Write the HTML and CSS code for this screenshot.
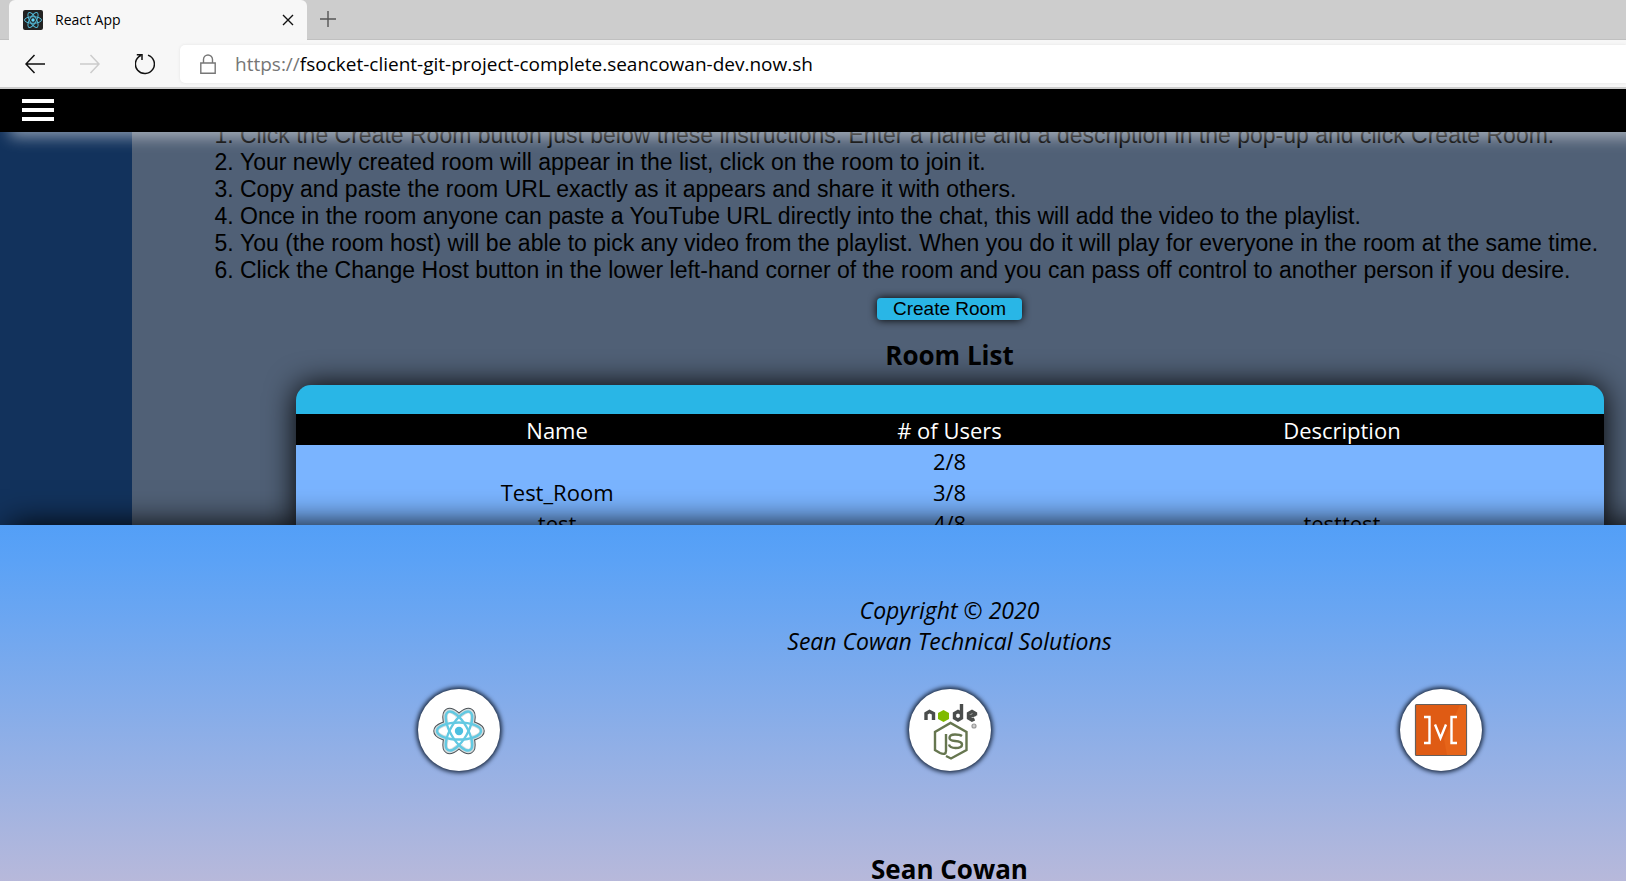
FILE: index.html
```html
<!DOCTYPE html>
<html lang="en">
<head>
<meta charset="utf-8">
<title>React App</title>
<link rel="stylesheet" href="styles.css">
</head>
<body>
<div class="browser">
  <div class="tabstrip">
    <div class="tab">
      <svg class="tab-icon" viewBox="0 0 20 20" aria-hidden="true">
        <rect width="20" height="20" rx="2" fill="#222"/>
        <g fill="none" stroke="#53b9d6" stroke-width="1">
          <ellipse cx="10" cy="10" rx="8.5" ry="3.3"/>
          <ellipse cx="10" cy="10" rx="8.5" ry="3.3" transform="rotate(60 10 10)"/>
          <ellipse cx="10" cy="10" rx="8.5" ry="3.3" transform="rotate(120 10 10)"/>
        </g>
        <circle cx="10" cy="10" r="1.7" fill="#61dafb"/>
      </svg>
      <span class="tab-title">React App</span>
      <button class="icon-button" aria-label="Close tab">
        <svg width="12" height="12" viewBox="0 0 12 12"><path d="M1 1L11 11M11 1L1 11" fill="none" stroke="#111" stroke-width="1.4"/></svg>
      </button>
    </div>
    <button class="icon-button new-tab" aria-label="New tab">
      <svg width="18" height="18" viewBox="0 0 18 18"><path d="M9 1V17M1 9H17" fill="none" stroke="#555" stroke-width="1.4"/></svg>
    </button>
  </div>
  <div class="toolbar">
    <div class="nav-buttons">
      <button class="icon-button" aria-label="Back">
        <svg width="20" height="20" viewBox="0 0 20 20"><path d="M9.500 1L1 10L9.500 19M1 10H20" fill="none" stroke="#111" stroke-width="1.500"/></svg>
      </button>
      <button class="icon-button" aria-label="Forward" disabled>
        <svg width="20" height="20" viewBox="0 0 20 20"><path d="M10.500 1L19 10L10.500 19M19 10H0" fill="none" stroke="#ccc" stroke-width="1.500"/></svg>
      </button>
      <button class="icon-button" aria-label="Reload">
        <svg width="20" height="22" viewBox="1 0 20 22"><path d="M14 2.100A9.500 9.500 0 1 1 6.800 2.500M2.800 1.800H8V7" fill="none" stroke="#111" stroke-width="1.500"/></svg>
      </button>
    </div>
    <div class="address">
      <svg width="16" height="20" viewBox="0 0 16 20" aria-hidden="true"><path d="M.8 9H15.200V19.200H.8ZM3.500 9V5.500A4.500 4.500 0 0 1 12.500 5.500V9" fill="none" stroke="#777" stroke-width="1.400"/></svg>
      <label class="scheme" for="url">https://</label>
      <input class="url" id="url" type="text" value="fsocket-client-git-project-complete.seancowan-dev.now.sh" spellcheck="false">
    </div>
  </div>
</div>

<div class="site">
  <header class="site-header">
    <button class="menu" aria-label="Menu">
      <svg width="32" height="22" viewBox="0 0 32 22"><path d="M0 2H32M0 11H32M0 20H32" stroke="#fff" stroke-width="4"/></svg>
    </button>
  </header>
  <main class="panel">
    <ol class="steps">
      <li>Click the Create Room button just below these instructions. Enter a name and a description in the pop-up and click Create Room.</li>
      <li>Your newly created room will appear in the list, click on the room to join it.</li>
      <li>Copy and paste the room URL exactly as it appears and share it with others.</li>
      <li>Once in the room anyone can paste a YouTube URL directly into the chat, this will add the video to the playlist.</li>
      <li>You (the room host) will be able to pick any video from the playlist. When you do it will play for everyone in the room at the same time.</li>
      <li>Click the Change Host button in the lower left-hand corner of the room and you can pass off control to another person if you desire.</li>
    </ol>
    <button class="create">Create Room</button>
    <h2 class="heading">Room List</h2>
    <div class="rooms">
      <table class="room-table">
        <thead>
          <tr><th class="edge"></th><th>Name</th><th># of Users</th><th>Description</th><th class="edge"></th></tr>
        </thead>
        <tbody>
          <tr><td></td><td></td><td>2/8</td><td></td><td></td></tr>
          <tr><td></td><td>Test_Room</td><td>3/8</td><td></td><td></td></tr>
          <tr><td></td><td>test</td><td>4/8</td><td>testtest</td><td></td></tr>
        </tbody>
      </table>
    </div>
  </main>
  <footer class="site-footer">
    <p class="copyright">Copyright © 2020<br>Sean Cowan Technical Solutions</p>
    <div class="badges">
      <a class="badge" href="#react" aria-label="React">
        <svg viewBox="0 0 82 82">
          <g fill="none" stroke="#4b5257" stroke-width="6.500">
            <ellipse cx="41" cy="42" rx="22.500" ry="8.500"/>
            <ellipse cx="41" cy="42" rx="22.500" ry="8.500" transform="rotate(60 41 42)"/>
            <ellipse cx="41" cy="42" rx="22.500" ry="8.500" transform="rotate(120 41 42)"/>
          </g>
          <g fill="#fff" stroke="#d5dcdd" stroke-width="4.500">
            <ellipse cx="41" cy="42" rx="22.500" ry="8.500"/>
            <ellipse cx="41" cy="42" rx="22.500" ry="8.500" transform="rotate(60 41 42)"/>
            <ellipse cx="41" cy="42" rx="22.500" ry="8.500" transform="rotate(120 41 42)"/>
          </g>
          <circle cx="41" cy="42" r="14" fill="#fff"/>
          <g fill="none" stroke="#62c9e2" stroke-width="2.400">
            <ellipse cx="41" cy="42" rx="22" ry="8.500"/>
            <ellipse cx="41" cy="42" rx="22" ry="8.500" transform="rotate(60 41 42)"/>
            <ellipse cx="41" cy="42" rx="22" ry="8.500" transform="rotate(120 41 42)"/>
          </g>
          <circle cx="41" cy="42" r="4.200" fill="#4bbfe0"/>
        </svg>
      </a>
      <a class="badge" href="#node" aria-label="Node.js">
        <svg viewBox="0 0 82 82">
          <g fill="none" stroke="#4a4d4c" stroke-width="3.400">
            <path d="M17 31V24.500L20.500 22.500L24.500 24.500V31"/>
            <path d="M52.500 15V29L49 31L45.500 29V24.500L49 22.500L52.500 24.500"/>
            <path d="M66.500 26.500V24.500L63 22.500L59.500 24.500V29L63 31L65.500 30M60 28L66.500 25.500"/>
          </g>
          <path d="M34.500 21L40 24V30L34.500 33L29 30V24Z" fill="#7fba00"/>
          <circle cx="65" cy="37" r="2" fill="#ccc" stroke="#999" stroke-width="1.200"/>
          <path d="M37 45V62Q37 66.500 31 64L26 61V43L41.500 34L57.500 43V61L42 69.500L37 67" fill="none" stroke="#66764f" stroke-width="2.400"/>
          <path d="M53 47Q51 45.500 46 45.500Q40.500 45.500 40.500 49Q40.500 51.500 46 52Q53 52.500 53 55.500Q53 59 46.500 59Q41 59 40 55.500" fill="none" stroke="#66764f" stroke-width="2.400"/>
        </svg>
      </a>
      <a class="badge" href="#mobx" aria-label="MobX">
        <svg viewBox="0 0 82 82">
          <rect x="15.500" y="15.500" width="51" height="51" rx="1" fill="#df5b14" stroke="#655f5c" stroke-width="1.200"/>
          <path d="M60 16.100H66V66H47L44 50Z" fill="#e66419"/>
          <path d="M24 28H29.500V54H24M57 28H51.500V54H57M35 35.500L40.500 49L46 35.500" fill="none" stroke="#fff" stroke-width="2.400"/>
        </svg>
      </a>
    </div>
    <h2 class="author">Sean Cowan</h2>
  </footer>
</div>
</body>
</html>
```
FILE: styles.css
```css
* { box-sizing: border-box; }

body {
  margin: 0;
  height: 100vh;
  overflow: hidden;
  display: flex;
  flex-direction: column;
  font-family: "Open Sans", "Noto Sans", sans-serif;
  font-size: 22px;
  color: #000;
  background: #12325c;
}

button { padding: 0; border: 0; background: none; font: inherit; color: inherit; }

.icon-button { display: flex; align-items: center; justify-content: center; }

.browser { flex: none; border-bottom: 2px solid #ccc; background: #f7f7f7; position: relative; z-index: 3; }

.tabstrip { display: flex; height: 40px; padding-left: 9px; background: #cdcdcd; border-bottom: 1px solid #c0c0c0; }

.tab {
  display: flex;
  align-items: center;
  gap: 12px;
  width: 298px;
  height: 40px;
  padding: 0 13px 0 14px;
  border-radius: 6px 6px 0 0;
  background: #f7f7f7;
}
.tab-icon { width: 20px; height: 20px; }
.tab-title { flex: 1; font-size: 14px; line-height: 20px; }
.new-tab { width: 42px; padding-bottom: 2px; }

.toolbar { display: flex; align-items: center; height: 47px; padding-left: 25px; }
.nav-buttons { display: flex; align-items: center; gap: 35px; width: 155px; }

.address {
  flex: 1;
  display: flex;
  align-items: center;
  height: 38px;
  padding-left: 20px;
  border-radius: 5px 0 0 5px;
  background: #fff;
  box-shadow: 0 0 3px #e2e2e2;
  font-size: 19px;
}
.scheme { margin-left: 19px; color: #767676; }
.url { flex: 1; min-width: 0; padding: 0; border: 0; outline: 0; background: none; font: inherit; color: #000; }

/* The site is laid out wider than the window and runs off its right edge. */
.site { flex: 1; width: calc(100% + 273px); display: flex; flex-direction: column; }

.site-header {
  flex: none;
  position: relative;
  z-index: 1;
  display: flex;
  align-items: center;
  height: 43px;
  padding: 0 22px 2px;
  background: #000;
  box-shadow: 10px 5px 15px rgba(255, 255, 255, .5);
}
.menu { display: flex; }

.panel {
  flex: none;
  display: flex;
  flex-direction: column;
  align-items: center;
  height: 393px;
  margin: 0 132px;
  background: #506076;
}

.steps {
  align-self: stretch;
  margin: -10px 0 14px;
  padding-left: 108px;
  font: 23px/27px "Liberation Sans", Arial, sans-serif;
  white-space: nowrap;
}

.create {
  flex: none;
  height: 22px;
  padding: 0 16px;
  border-radius: 4px;
  background: #29b6e6;
  box-shadow: 0 0 8px #000;
  font: 19px/22px "Liberation Sans", Arial, sans-serif;
}

.heading, .author { margin: 0; font-size: 26px; line-height: 36px; font-weight: 700; }
.heading { margin: 17px 0 12px; }

.rooms {
  width: 80%;
  padding-top: 29px;
  border-radius: 15px 15px 0 0;
  background: #29b6e6;
  box-shadow: 0 0 30px #000;
}
.room-table { width: 100%; table-layout: fixed; border-collapse: collapse; background: #7ab4ff; text-align: center; }
.room-table th, .room-table td { height: 31px; padding: 2px 0 0; line-height: 29px; font-weight: 400; }
.room-table th { background: #000; color: #fff; }
.room-table .edge { width: 5%; }

.site-footer {
  flex: 1;
  position: relative;
  display: flex;
  flex-direction: column;
  align-items: center;
  padding-top: 70px;
  background: linear-gradient(#539ff7, #5ba2f6 10%, #b9b9da);
  box-shadow: 10px 0 30px #000;
}
.copyright { margin: 0 0 32px; text-align: center; font-size: 23px; font-style: italic; line-height: 31px; }
.badges { display: grid; grid-template-columns: repeat(3, 491px); justify-content: center; justify-items: center; }
.badge { width: 82px; height: 82px; border-radius: 50%; background: #fff; box-shadow: 0 0 4px 2px #1d2c44; }
.badge svg { display: block; }
.author { margin-top: 80px; }
```
